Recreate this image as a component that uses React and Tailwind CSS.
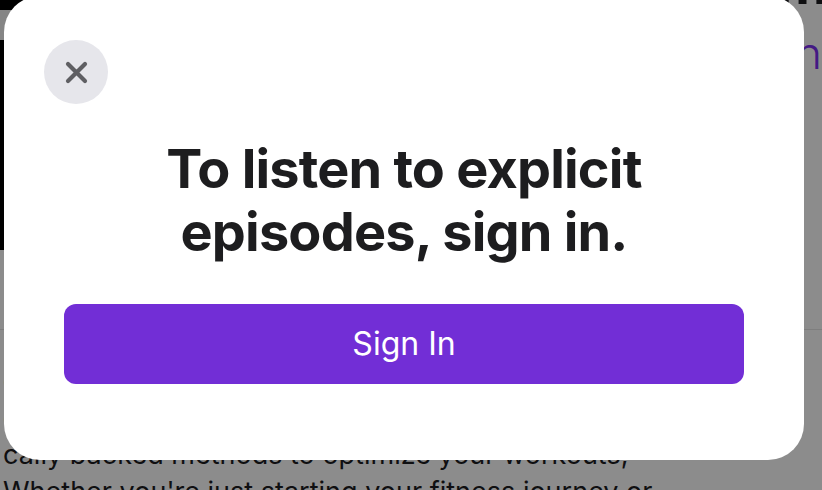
import React from 'react';

const font = { fontFamily: 'Inter, "Noto Sans", sans-serif' };

function CloseIcon() {
  return (
    <svg width="23" height="23" viewBox="0 0 23 23" fill="none">
      <path d="M3 3L20 20M20 3L3 20" stroke="#5f5f63" strokeWidth="4.2" strokeLinecap="round" />
    </svg>
  );
}

export default function App() {
  return (
    <div
      className="relative w-[822px] h-[490px] overflow-hidden bg-white font-['Inter','Noto_Sans',sans-serif]"
      style={font}
    >
      {/* Page behind the sheet */}
      <div className="flex flex-col">
        <div className="flex h-[250px]">
          <div className="w-[320px] h-[250px] bg-black flex flex-col pt-[10px]">
            <div className="w-[60px] h-[30px] bg-[#f2f2f2]" />
          </div>
          <div className="flex-1 flex flex-col items-end overflow-hidden">
            <div className="text-[56px] leading-[56px] font-bold text-[#1d1d1f] whitespace-nowrap -mt-[44px] -mr-[6px]">
              Fitness Podcast Premium
            </div>
            <div className="mt-[17px] text-[44px] leading-[48px] font-light text-[#7c2ff0] whitespace-nowrap">
              Sign In
            </div>
          </div>
        </div>
        <div className="h-[80px] border-b border-[#e5e5e5]" />
        <div className="pt-[32px] px-[3px] text-[27px] leading-[37px] text-[#1d1d1f] whitespace-nowrap">
          <div>exploring the latest research in exercise science, we</div>
          <div>cover training, nutrition and recovery with scientifi-</div>
          <div>cally backed methods to optimize your workouts,</div>
          <div>Whether you're just starting your fitness journey or</div>
        </div>
      </div>

      {/* Dim overlay */}
      <div className="absolute inset-0 bg-black/45" />

      {/* Sheet */}
      <div className="absolute left-[4px] top-[-4px] w-[800px] h-[464px] rounded-[36px] bg-white flex flex-col px-[60px] pt-[44px]">
        <button className="-ml-[20px] w-[64px] h-[64px] rounded-full bg-[#e6e6eb] flex items-center justify-center">
          <CloseIcon />
        </button>
        <h1 className="mt-[33px] text-center text-[54px] leading-[63px] font-bold tracking-[-0.8px] text-[#1d1d1f]">
          To listen to explicit
          <br />
          episodes, sign in.
        </h1>
        <button className="mt-[41px] h-[80px] w-full rounded-[12px] bg-[#722ed6] text-white text-[32px] leading-[40px] flex items-center justify-center">
          Sign In
        </button>
      </div>
    </div>
  );
}
